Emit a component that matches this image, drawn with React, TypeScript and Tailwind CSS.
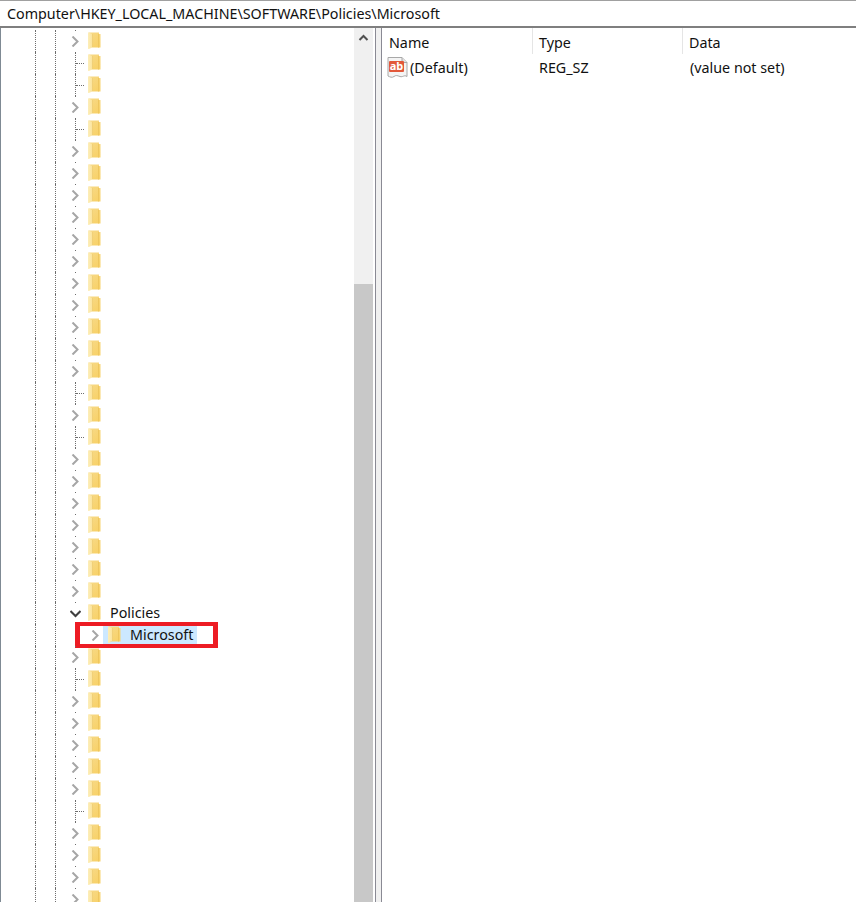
import React from 'react';

const FONT = "font-['Noto_Sans','Open_Sans',sans-serif]";

type Kind = 'closed' | 'leaf' | 'open' | 'child';

// row list top to bottom, 22px each
const rows: Kind[] = [
  'closed', 'leaf', 'leaf', 'closed', 'leaf', 'closed', 'closed', 'closed', 'closed', 'closed',
  'closed', 'closed', 'closed', 'closed', 'closed', 'closed', 'leaf', 'closed', 'leaf', 'closed',
  'closed', 'closed', 'closed', 'closed', 'closed', 'closed', 'open', 'child', 'closed', 'leaf',
  'closed', 'closed', 'closed', 'closed', 'closed', 'leaf', 'closed', 'closed', 'closed', 'closed',
];

function Folder() {
  return (
    <svg width="13" height="18" viewBox="0 0 13 18" className="shrink-0">
      <defs>
        <linearGradient id="fold" x1="0" y1="0" x2="0.6" y2="1">
          <stop offset="0" stopColor="#f7d987" />
          <stop offset="1" stopColor="#f8d26a" />
        </linearGradient>
        <linearGradient id="flap" x1="0" y1="0" x2="1" y2="0">
          <stop offset="0" stopColor="#fdeeb9" />
          <stop offset="1" stopColor="#fbe39a" />
        </linearGradient>
      </defs>
      <path d="M0.500 0.500h10.500v1.500h1.500V15.500H0.500z" fill="url(#fold)" />
      <path d="M10.500 2v13.500" stroke="#eec65f" strokeWidth="1" />
      <path d="M0 0.500l4.500 1.500V15H2.500v1.500L0 17z" fill="url(#flap)" />
      <path d="M4.500 2V15" stroke="#ecca70" strokeWidth="0.7" />
    </svg>
  );
}

function Chevron({ open }: { open?: boolean }) {
  return (
    <svg width="11" height="11" viewBox="0 0 11 11" className="block">
      {open ? (
        <path d="M0.500 3L5.500 8l5-5" fill="none" stroke="#3f3f3f" strokeWidth="2" />
      ) : (
        <path d="M2.500 0.500L7.500 5.500l-5 5" fill="none" stroke="#a6a6a6" strokeWidth="2" />
      )}
    </svg>
  );
}

function Guide() {
  return <div className="w-5 h-full shrink-0 border-l border-dotted border-[#6e6e6e]" />;
}

function TreeRow({ kind }: { kind: Kind }) {
  return (
    <div className="h-[22px] shrink-0 flex items-center pl-[34px]">
      <Guide />
      <Guide />
      {kind === 'child' ? (
        <>
          <div className="w-[13px] h-full shrink-0" />
          <div className="relative flex items-center h-full w-[130px] shrink-0">
            <div className="absolute left-[-13px] top-[-2px] w-[143px] h-[26px] border-x-[5px] border-y-[4px] border-[#ed1c24]" />
            <div className="w-[11px] ml-[2px] mr-[2px] shrink-0"><Chevron /></div>
            <div className="flex items-center h-[18px] w-[94px] bg-[#cce8ff] pl-[5px]">
              <Folder />
              <span className={`${FONT} ml-[9px] text-[14.3px] leading-none text-[#111] whitespace-nowrap`}>Microsoft</span>
            </div>
          </div>
        </>
      ) : (
        <>
          <div className="relative w-[18px] h-full shrink-0 -ml-[5px]">
            {kind === 'leaf' ? (
              <div className="ml-[5px] h-full w-[9px] border-l border-dotted border-[#6e6e6e] flex items-center">
                <div className="w-full border-t border-dotted border-[#6e6e6e]" />
              </div>
            ) : (
              <>
                <div className="absolute left-[5px] top-0 w-px h-px bg-[#6e6e6e]" />
                <div className="h-full flex items-center"><Chevron open={kind === 'open'} /></div>
              </>
            )}
          </div>
          <Folder />
          {kind === 'open' && (
            <span className={`${FONT} ml-[9px] text-[14.3px] leading-none text-[#111] whitespace-nowrap`}>Policies</span>
          )}
        </>
      )}
    </div>
  );
}

function ValueIcon() {
  return (
    <svg width="21" height="22" viewBox="0 0 21 22" className="shrink-0">
      <path d="M1 1.500h14l5 5v14c-3-2-4 1-7 0s-4-1.500-6 0-4 .5-6-.5z" fill="#f4f4f4" stroke="#a8a8a8" />
      <path d="M15 1.500v5h5" fill="#e2e2e2" stroke="#a8a8a8" />
      <rect x="2" y="5" width="15" height="11" rx="1" fill="#e2583a" />
      <text x="9.500" y="14" textAnchor="middle" fontSize="11" fontWeight="700" fill="#fff" fontFamily="Noto Sans, sans-serif">ab</text>
    </svg>
  );
}

export default function App() {
  return (
    <div className={`${FONT} w-[856px] h-[902px] overflow-hidden bg-white flex flex-col`}>
      <div className="h-[28px] shrink-0 border-t border-[#a0a0a0] border-b-2 border-b-[#7f7f7f] pl-[7px] flex items-center text-[14.3px] text-[#111] whitespace-nowrap">
        Computer\HKEY_LOCAL_MACHINE\SOFTWARE\Policies\Microsoft
      </div>
      <div className="flex flex-1 min-h-0">
        <div className="w-[354px] shrink-0 border-l border-[#7f8a94] overflow-hidden flex flex-col pt-[2px]">
          {rows.map((r, i) => <TreeRow key={i} kind={r} />)}
        </div>
        <div className="w-[19px] shrink-0 flex flex-col bg-[#f0f0f0]">
          <div className="h-[256px] shrink-0 flex justify-center pt-[6px]">
            <svg width="11" height="7" viewBox="0 0 11 7"><path d="M1.500 6L5.500 2l4 4" fill="none" stroke="#505050" strokeWidth="2" /></svg>
          </div>
          <div className="flex-1 bg-[#c8c8c8]" />
        </div>
        <div className="w-[7px] shrink-0 ml-[2px] border-x border-[#8a8a94] bg-[#f0f0f0]" />
        <div className="flex-1 min-w-0 text-[14.3px] text-[#111]">
          <div className="h-[26px] flex items-center">
            <div className="w-[151px] h-full pl-[7px] pt-[4px] border-r border-[#e5e5e5] flex items-center">Name</div>
            <div className="w-[150px] h-full pl-[6px] pt-[4px] border-r border-[#e5e5e5] flex items-center">Type</div>
            <div className="pl-[6px] h-full pt-[4px] flex items-center">Data</div>
          </div>
          <div className="h-[26px] flex items-center">
            <div className="w-[151px] pl-[5px] flex items-center gap-[2px]">
              <ValueIcon />
              <span className="pt-[2px]">(Default)</span>
            </div>
            <div className="w-[150px] pl-[6px] pt-[2px]">REG_SZ</div>
            <div className="pl-[7px] pt-[2px]">(value not set)</div>
          </div>
        </div>
      </div>
    </div>
  );
}
